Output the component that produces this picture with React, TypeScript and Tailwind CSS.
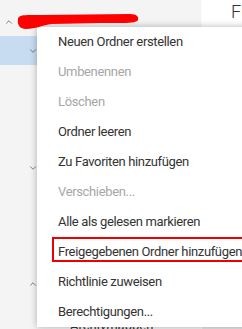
import { ChevronUp, ChevronDown, ChevronRight } from 'lucide-react';

const items = [
  { label: 'Neuen Ordner erstellen' },
  { label: 'Umbenennen', disabled: true },
  { label: 'Löschen', disabled: true },
  { label: 'Ordner leeren' },
  { label: 'Zu Favoriten hinzufügen' },
  { label: 'Verschieben...', disabled: true },
  { label: 'Alle als gelesen markieren' },
  { label: 'Freigegebenen Ordner hinzufügen...', marked: true },
  { label: 'Richtlinie zuweisen', sub: true },
  { label: 'Berechtigungen...' },
];

export default function App() {
  return (
    <div className="relative flex h-[329px] w-[242px] overflow-hidden bg-white font-['Roboto','Noto_Sans',sans-serif] text-[13px] text-[#333]">
      {/* Ordnerliste */}
      <div className="flex w-[201px] shrink-0 flex-col bg-[#f4f4f4] pt-[7px]">
        <div className="flex h-[30px] items-center pl-[4px] text-[#666]">
          <ChevronUp className="h-[10px] w-[10px]" strokeWidth={2} />
        </div>
        <div className="flex h-[30px] items-center bg-[#c7dcf0] pl-[28px] text-[#666]">
          <ChevronDown className="h-[10px] w-[10px]" strokeWidth={2} />
        </div>
        <div className="h-[90px]" />
        <div className="flex h-[30px] items-center pl-[28px] text-[#666]">
          <ChevronDown className="h-[10px] w-[10px]" strokeWidth={2} />
        </div>
        <div className="h-[90px]" />
        <div className="flex h-[30px] items-center pl-[28px] text-[#666]">
          <ChevronUp className="h-[10px] w-[10px]" strokeWidth={2} />
        </div>
        <div className="h-[30px] pl-[70px] pt-[19px] leading-[16px]">Archivmappen</div>
      </div>

      {/* Inhalt */}
      <div className="flex flex-1 flex-col border-l border-[#fafafa]">
        <div className="h-[25px] pl-[29px] text-[18px] leading-[24px] font-light text-[#333]">Fü</div>
        <div className="flex-1" />
        <div className="h-[2px] bg-[#e6e6e6]" />
      </div>

      {/* Kontextmenü */}
      <div className="absolute left-[37px] top-[27px] w-[230px] bg-white shadow-[0_0_7px_rgba(0,0,0,0.3)]">
        {items.map((it) => (
          <div key={it.label} className="relative flex h-[30px] items-center whitespace-nowrap pl-[21px] tracking-[-0.35px]">
            <span className={it.disabled ? 'text-[#a6a6a6]' : 'text-[#333]'}>{it.label}</span>
            {it.sub && (
              <ChevronRight className="absolute left-[203px] h-[9px] w-[9px] text-[#c9863a]" strokeWidth={2} />
            )}
            {it.marked && (
              <div className="absolute left-[15px] right-[-8px] top-0 h-[25px] border-2 border-[#ee0000]" />
            )}
          </div>
        ))}
      </div>

      {/* Schwärzung */}
      <svg className="absolute left-0 top-0" width="150" height="35" viewBox="0 0 150 35">
        <path
          d="M18,19 C18,14 28,15 40,15 L130,14 C137,14 139,17 138,20 C136,24 120,23 100,23 L52,24 C42,25 36,29 26,29 C20,29 17,25 18,19 Z"
          fill="#ff0000"
        />
      </svg>
    </div>
  );
}
